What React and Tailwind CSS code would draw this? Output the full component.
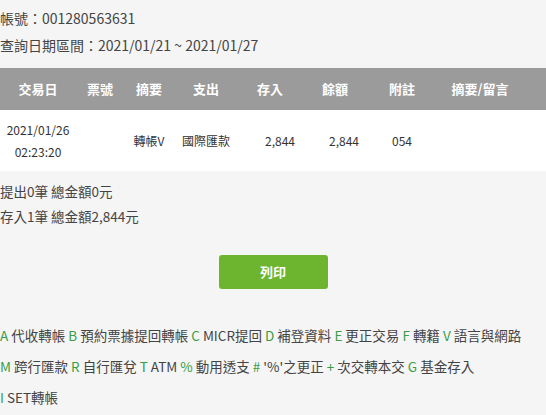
const HEAD = [
  { label: '交易日', w: 'w-[76px]' },
  { label: '票號', w: 'w-[48px]' },
  { label: '摘要', w: 'w-[50px]' },
  { label: '支出', w: 'w-[64px]' },
  { label: '存入', w: 'w-[64px]' },
  { label: '餘額', w: 'w-[66px]' },
  { label: '附註', w: 'w-[68px]' },
  { label: '摘要/留言', w: 'flex-1 pr-[22px]' },
]

const CODES = [
  [
    ['A', '代收轉帳'], ['B', '預約票據提回轉帳'], ['C', 'MICR提回'], ['D', '補登資料'],
    ['E', '更正交易'], ['F', '轉籍'], ['V', '語言與網路'],
  ],
  [
    ['M', '跨行匯款'], ['R', '自行匯兌'], ['T', 'ATM'], ['%', '動用透支'],
    ['#', "'%'之更正"], ['+', '次交轉本交'], ['G', '基金存入'],
  ],
  [['I', 'SET轉帳']],
]

export default function App() {
  return (
    <div className="min-h-[415px] bg-[#f5f5f5] text-[14px] text-[#444] font-['Noto_Sans_CJK_TC','Noto_Sans',sans-serif]">
      {/* 查詢資訊 */}
      <div className="pt-[5px] leading-[27px]">
        <div>帳號：001280563631</div>
        <div>查詢日期區間：2021/01/21 ~ 2021/01/27</div>
      </div>

      {/* 明細表 */}
      <div className="mt-[9px]">
        <div className="flex h-[42px] items-center bg-[#9b9b9b] font-bold text-[13px] text-white">
          {HEAD.map(h => (
            <div key={h.label} className={`${h.w} text-center`}>{h.label}</div>
          ))}
        </div>
        <div className="flex h-[61px] items-center bg-white text-[12px] text-[#333]">
          <div className="w-[76px] text-center leading-[22px]">
            <div>2021/01/26</div>
            <div>02:23:20</div>
          </div>
          <div className="w-[48px]"></div>
          <div className="w-[50px] text-center">轉帳V</div>
          <div className="w-[64px] text-center">國際匯款</div>
          <div className="w-[64px] text-right pr-[7px]">2,844</div>
          <div className="w-[66px] text-right pr-[9px]">2,844</div>
          <div className="w-[68px] text-center">054</div>
          <div className="flex-1"></div>
        </div>
      </div>

      {/* 合計 */}
      <div className="mt-[8px] leading-[25px] text-[13.5px]">
        <div>提出0筆 總金額0元</div>
        <div>存入1筆 總金額2,844元</div>
      </div>

      <div className="mt-[26px] flex justify-center">
        <button className="h-[34px] w-[109px] rounded-[3px] bg-[#6db52e] text-[13px] font-bold text-white">
          列印
        </button>
      </div>

      {/* 代碼說明 */}
      <div className="mt-[31px] leading-[31px] pb-[4px] text-[13.5px]">
        {CODES.map((line, i) => (
          <div key={i} className="whitespace-nowrap">
            {line.map(([k, v], j) => (
              <span key={k}>
                {j > 0 && ' '}
                <span className="text-[#3a9d46]">{k}</span> {v}
              </span>
            ))}
          </div>
        ))}
      </div>
    </div>
  )
}
